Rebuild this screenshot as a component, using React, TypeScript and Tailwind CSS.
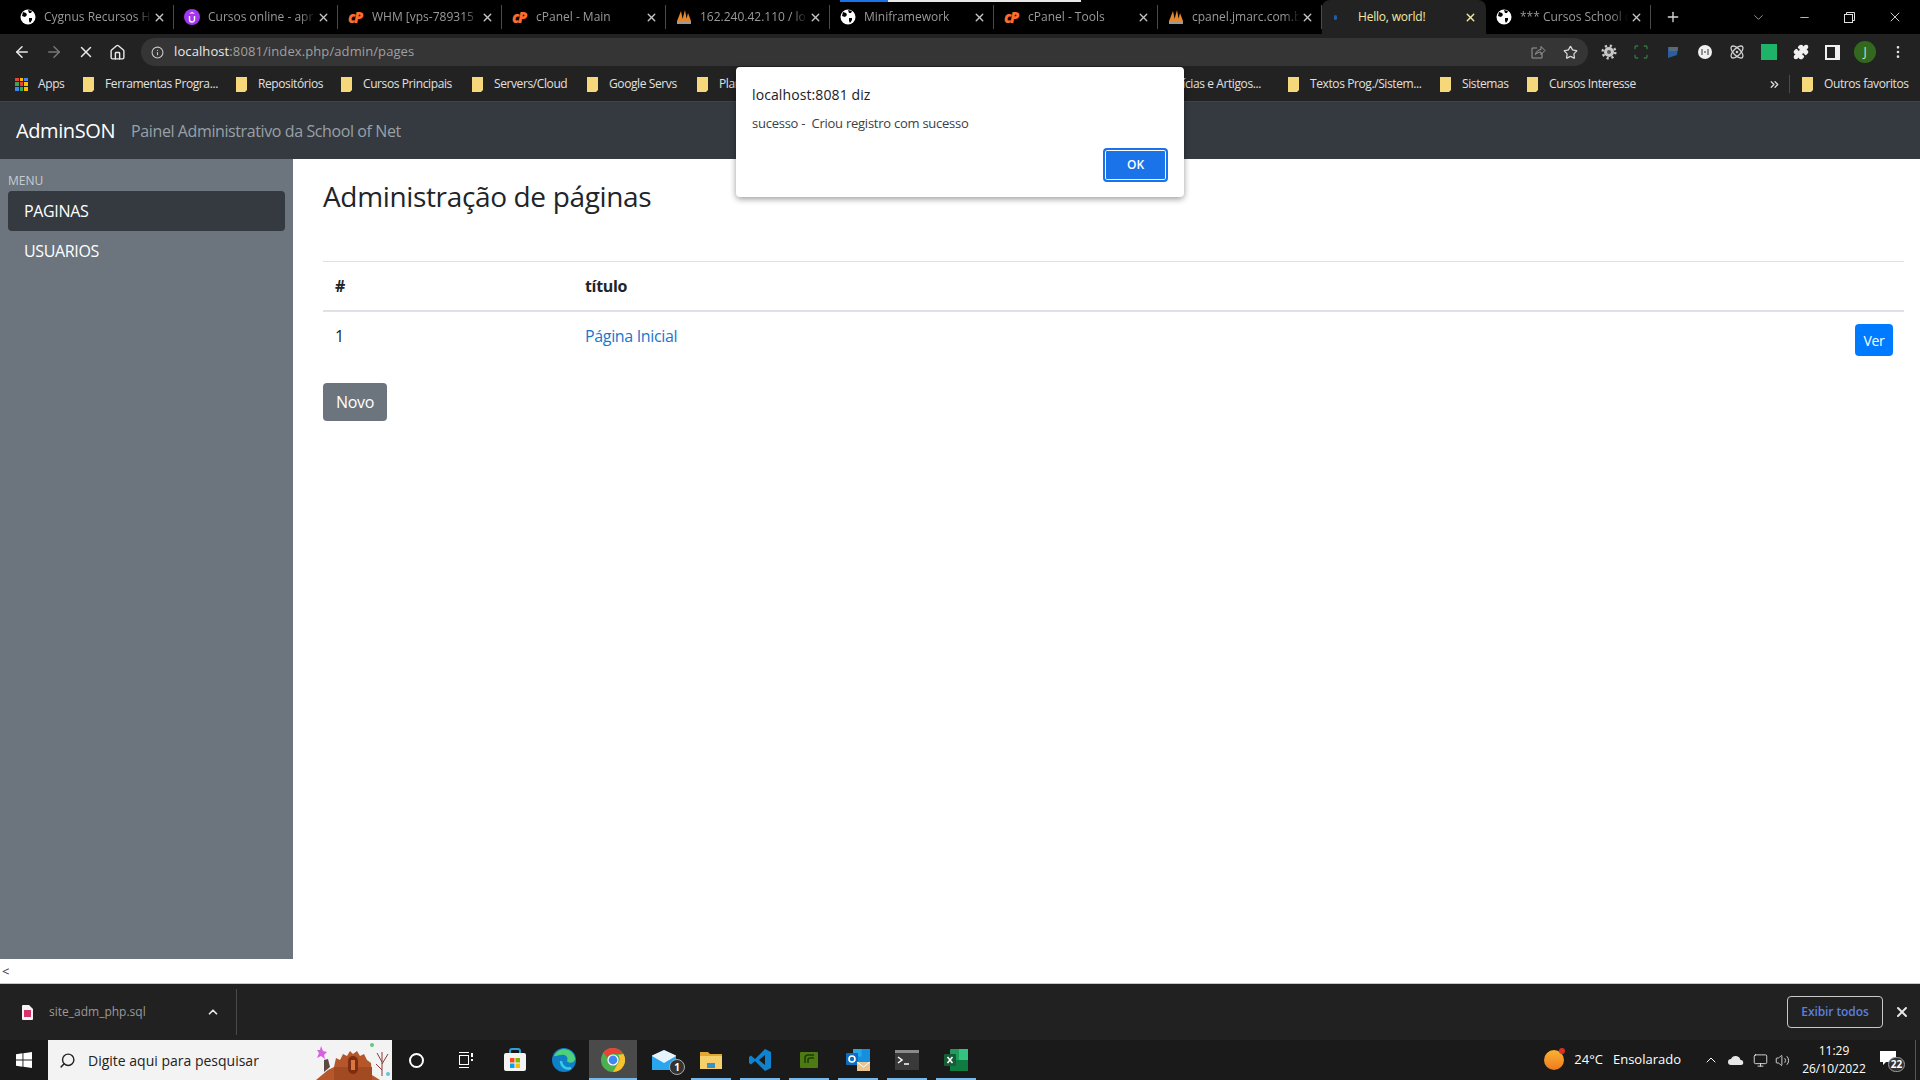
import { ChevronDown, ChevronUp, Minus, Plus, X, ArrowLeft, ArrowRight, Home, Info, Star, Scan, Atom, Puzzle, EllipsisVertical, Search, Volume2, Monitor, ChevronsRight } from 'lucide-react'

function Globe() {
  return (
    <svg width="16" height="16" viewBox="0 0 16 16" className="shrink-0">
      <circle cx="8" cy="8" r="7.5" fill="#fff" />
      <path d="M3 3l3 1 1 2-2 2-3-1zM9 9l3 0 0 2-2 3-1-2zM8 1l4 1-1 2-2 0z" fill="#000" />
    </svg>
  )
}

function CPanelIcon() {
  return (
    <span className="w-4 shrink-0 text-[15px] leading-none font-black italic tracking-[-1.5px] text-[#ff6c2c]">cP</span>
  )
}

function PmaIcon() {
  return (
    <svg width="16" height="16" viewBox="0 0 16 16" className="shrink-0">
      <path d="M1 12 5 2l2 10zM6 12 9 1l2 11zM10 12l2-8 3 8z" fill="#e8862a" />
      <rect x="1" y="12" width="14" height="3" fill="#9a9a9a" />
    </svg>
  )
}

function UdemyIcon() {
  return (
    <svg width="16" height="16" viewBox="0 0 16 16" className="shrink-0">
      <circle cx="8" cy="8" r="8" fill="#a435f0" />
      <path d="M5.5 7v3.5a2.5 2.5 0 0 0 5 0V7" fill="none" stroke="#fff" strokeWidth="1.4" />
      <path d="M8 3l3 1.6H5z" fill="#fff" />
    </svg>
  )
}

const TABS = [
  { title: 'Cygnus Recursos H', icon: <Globe /> },
  { title: 'Cursos online - apr', icon: <UdemyIcon /> },
  { title: 'WHM [vps-789315', icon: <CPanelIcon /> },
  { title: 'cPanel - Main', icon: <CPanelIcon /> },
  { title: '162.240.42.110 / lo', icon: <PmaIcon /> },
  { title: 'Miniframework', icon: <Globe /> },
  { title: 'cPanel - Tools', icon: <CPanelIcon /> },
  { title: 'cpanel.jmarc.com.b', icon: <PmaIcon /> },
]

function Tab({ title, icon, last }: { title: string; icon: React.ReactNode; last?: boolean }) {
  return (
    <div className={`flex h-[24px] w-[164px] shrink-0 items-center pl-[10px] pr-[7px] ${last ? '' : 'border-r border-[#4a4a4a]'}`}>
      {icon}
      <span className="ml-[8px] w-[108px] overflow-hidden whitespace-nowrap text-[12px] text-[#9a9a9a] [mask-image:linear-gradient(to_right,black_85%,transparent)]">
        {title}
      </span>
      <X size={13} strokeWidth={2.5} className="ml-auto shrink-0 text-[#c4c4c4]" />
    </div>
  )
}

function TabBar() {
  return (
    <div className="relative flex h-[34px] items-center bg-black pl-[10px] text-white">
      <div className="absolute left-[840px] top-0 h-[2px] w-[241px] bg-[#e8e8e8]" />
      <div className="absolute left-[840px] top-0 h-[2px] w-[48px] bg-[#1a73e8]" />
      {TABS.map((t) => (
        <Tab key={t.title} title={t.title} icon={t.icon} />
      ))}
      <div className="flex h-[34px] w-[164px] shrink-0 items-center self-end rounded-t-lg bg-[#222222] pl-[12px] pr-[9px]">
        <span className="h-[5px] w-[3px] rounded-full bg-[#1f5fa8]" />
        <span className="ml-[21px] text-[12px] tracking-[-0.2px] text-[#f4e9a4]">Hello, world!</span>
        <X size={13} strokeWidth={2.5} className="ml-auto text-[#f4e9a4]" />
      </div>
      <Tab title="*** Cursos School d" icon={<Globe />} last />
      <div className="h-[24px] border-l border-[#4a4a4a]" />
      <Plus size={16} strokeWidth={2} className="ml-[14px] text-[#d8d8d8]" />
      <ChevronDown size={15} strokeWidth={1.5} className="ml-[70px] text-[#a0a0a0]" />
      <Minus size={13} strokeWidth={1.5} className="ml-[32px] text-[#e0e0e0]" />
      <svg width="11" height="11" viewBox="0 0 11 11" className="ml-[33px]" fill="none" stroke="#e0e0e0">
        <rect x="0.5" y="2.5" width="8" height="8" />
        <path d="M2.5 2.5v-2h8v8h-2" />
      </svg>
      <X size={16} strokeWidth={1.25} className="ml-[32px] text-[#f0f0f0]" />
    </div>
  )
}

function ToolButton({ children, width }: { children: React.ReactNode; width: string }) {
  return <div className={`flex items-center justify-center ${width}`}>{children}</div>
}

function Toolbar() {
  return (
    <div className="flex h-[33px] items-start bg-[#222222] pl-[6px] text-[#e8e8e8]">
      <ToolButton width="h-[28px] w-[32px] mt-[4px]"><ArrowLeft size={18} strokeWidth={2} /></ToolButton>
      <ToolButton width="h-[28px] w-[31px] mt-[4px]"><ArrowRight size={18} strokeWidth={2} className="text-[#777]" /></ToolButton>
      <ToolButton width="h-[28px] w-[33px] mt-[4px]"><X size={18} strokeWidth={2} /></ToolButton>
      <ToolButton width="h-[28px] w-[31px] mt-[4px]"><Home size={17} strokeWidth={2} /></ToolButton>
      <div className="ml-[8px] mt-[4px] flex h-[28px] w-[1447px] items-center rounded-full bg-[#353535] pl-[10px] pr-[10px]">
        <Info size={13} className="text-[#c8c8c8]" />
        <span className="ml-[10px] text-[13px] tracking-[0.1px] text-[#e8e8e8]">
          localhost<span className="text-[#a0a0a0]">:8081/index.php/admin/pages</span>
        </span>
        <svg width="16" height="16" viewBox="0 0 16 16" className="ml-auto" fill="none" stroke="#9a9a9a">
          <path d="M7 4H2v10h10V9.5" />
          <path d="M5.5 10.5C6 7.5 8.5 5.5 11 5.5V2.5l4 4-4 4V8C9 8 7 8.8 5.5 10.5z" />
        </svg>
        <Star size={15} className="ml-[17px] text-[#d8d8d8]" />
      </div>
      <div className="ml-[13px] mt-[4px] flex h-[28px] items-center gap-[16px]">
        <svg width="16" height="16" viewBox="0 0 16 16" fill="none">
          <circle cx="8" cy="8" r="5" fill="#c8c8c8" />
          <circle cx="8" cy="8" r="6.3" stroke="#c8c8c8" strokeWidth="2.5" strokeDasharray="2.2 2.75" />
          <circle cx="8" cy="8" r="2" fill="#555" />
        </svg>
        <Scan size={16} className="text-[#2f7a3c]" />
        <svg width="16" height="16" viewBox="0 0 16 16"><path d="M3 3h10l-1 8-9 3z" fill="#2c5e9e" /><path d="M4 3h9l-.5 4H4z" fill="#5a6a7a" /></svg>
        <svg width="16" height="16" viewBox="0 0 16 16"><circle cx="8" cy="8" r="7" fill="#f0f0f0" /><path d="M5 5v6M11 5v6M7 8h2" stroke="#333" /></svg>
        <Atom size={16} className="text-[#d0d0d0]" />
        <span className="h-[16px] w-[16px] bg-[#1db46a]" />
        <Puzzle size={16} className="text-[#f0f0f0]" fill="#f0f0f0" />
        <span className="h-[15px] w-[15px] border-2 border-r-[5px] border-[#f0f0f0] bg-[#222222]" />
        <span className="-mx-[2px] flex h-[22px] w-[22px] items-center justify-center rounded-full bg-[#33691e] text-[12px] text-[#c8e6c9]">J</span>
        <EllipsisVertical size={16} className="text-[#e0e0e0]" />
      </div>
    </div>
  )
}

function Folder() {
  return (
    <svg width="11" height="15" viewBox="0 0 11 15" className="shrink-0">
      <rect width="11" height="15" fill="#f6d87a" />
      <path d="M9 15l2-2v2z" fill="#222" />
    </svg>
  )
}

const BOOKMARKS = [
  { label: 'Ferramentas Progra...', width: 'w-[153px]' },
  { label: 'Repositórios', width: 'w-[105px]' },
  { label: 'Cursos Principais', width: 'w-[131px]' },
  { label: 'Servers/Cloud', width: 'w-[115px]' },
  { label: 'Google Servs', width: 'w-[110px]' },
  { label: 'Planos', width: 'w-[444px]' },
  { label: 'Notícias e Artigos...', width: 'w-[147px]' },
  { label: 'Textos Prog./Sistem...', width: 'w-[152px]' },
  { label: 'Sistemas', width: 'w-[87px]' },
  { label: 'Cursos Interesse', width: 'w-[241px]' },
]

function Bookmarks() {
  return (
    <div className="flex h-[34px] items-center bg-[#222222] pl-[15px] text-[12px] tracking-[-0.4px] text-[#e0e0e0]">
      <div className="grid h-[13px] w-[13px] grid-cols-3 gap-[1px]">
        <span className="bg-[#ea4335]" /><span className="bg-[#fbbc05]" /><span className="bg-[#4285f4]" />
        <span className="bg-[#34a853]" /><span className="bg-[#ea4335]" /><span className="bg-[#fbbc05]" />
        <span className="bg-[#4285f4]" /><span className="bg-[#34a853]" /><span className="bg-[#fbbc05]" />
      </div>
      <span className="ml-[10px] w-[45px]">Apps</span>
      {BOOKMARKS.map((b) => (
        <div key={b.label} className={`flex shrink-0 items-center overflow-hidden whitespace-nowrap ${b.width}`}>
          <Folder />
          <span className="ml-[11px]">{b.label}</span>
        </div>
      ))}
      <ChevronsRight size={13} strokeWidth={2.5} className="mr-[8px] text-[#d8d8d8]" />
      <div className="mr-[12px] h-[18px] border-l border-[#4a4a4a]" />
      <Folder />
      <span className="ml-[11px] whitespace-nowrap">Outros favoritos</span>
    </div>
  )
}

function Navbar() {
  return (
    <div className="flex h-[58px] items-center border-t border-[#3f444a] bg-[#343a40] pl-[16px] tracking-[-0.4px]">
      <span className="text-[20px] text-white">AdminSON</span>
      <span className="ml-[16px] text-[16px] text-[#9aa0a6]">Painel Administrativo da School of Net</span>
    </div>
  )
}

function Sidebar() {
  return (
    <div className="flex w-[293px] shrink-0 flex-col bg-[#6c757d] px-[8px] pt-[13px] text-white">
      <div className="text-[12px] leading-[18px] text-[#c8ccd0]">MENU</div>
      <div className="mt-[1px] flex h-[40px] items-center rounded bg-[#343a40] pl-[16px] text-[16px] tracking-[-0.35px]">PAGINAS</div>
      <div className="flex h-[40px] items-center pl-[16px] text-[16px] tracking-[-0.35px]">USUARIOS</div>
    </div>
  )
}

function Content() {
  return (
    <div className="flex-1 pl-[30px] pr-[16px] pt-[16px] tracking-[-0.35px] text-[#212529]">
      <h3 className="text-[28px] leading-[42px] font-medium">Administração de páginas</h3>
      <div className="mt-[44px] border-t border-[#dee2e6]">
        <div className="flex h-[50px] items-center border-b-2 border-[#dee2e6] text-[16px] font-bold">
          <div className="w-[262px] pl-[12px]">#</div>
          <div>título</div>
        </div>
        <div className="flex h-[50px] items-start text-[16px]">
          <div className="mt-[12px] w-[262px] pl-[12px]">1</div>
          <a className="mt-[12px] text-[#1a76cc]">Página Inicial</a>
          <button className="mt-[12px] ml-auto mr-[11px] h-[32px] w-[38px] rounded bg-[#007bff] text-[14px] text-white">Ver</button>
        </div>
      </div>
      <button className="mt-[21px] h-[38px] w-[64px] rounded bg-[#6c757d] text-[16px] text-white">Novo</button>
    </div>
  )
}

function AlertDialog() {
  return (
    <div className="absolute left-[736px] top-[67px] h-[130px] w-[448px] rounded bg-white shadow-[0_2px_6px_rgba(0,0,0,0.4)]">
      <div className="pl-[16px] pt-[17px] text-[14px] leading-[22px] tracking-[0.1px] text-[#202124]">localhost:8081 diz</div>
      <div className="pl-[16px] pt-[8px] text-[13px] leading-[18px] tracking-[-0.25px] text-[#3c4043]">sucesso -&nbsp; Criou registro com sucesso</div>
      <button className="absolute left-[367px] top-[81px] h-[34px] w-[65px] rounded border-2 border-[#1a73e8] bg-[#1a73e8] text-[12px] font-semibold text-white shadow-[inset_0_0_0_1px_#fff]">
        OK
      </button>
    </div>
  )
}

function DownloadBar() {
  return (
    <div className="flex h-[57px] items-center border-t border-[#c8c8c8] bg-[#212121] pl-[22px]">
      <svg width="11" height="15" viewBox="0 0 11 15" className="shrink-0">
        <path d="M0 1a1 1 0 0 1 1-1h6l4 4v10a1 1 0 0 1-1 1H1a1 1 0 0 1-1-1z" fill="#f4f4f4" />
        <rect x="2" y="5" width="7" height="7" fill="#d6336c" />
      </svg>
      <span className="ml-[16px] text-[12px] text-[#9a9a9a]">site_adm_php.sql</span>
      <ChevronUp size={14} strokeWidth={3} className="ml-[60px] text-[#e8e8e8]" />
      <div className="ml-[16px] h-[46px] border-l border-[#4a4a4a]" />
      <button className="ml-auto h-[32px] w-[96px] rounded border border-[#c8c8c8] text-[12px] font-semibold tracking-[-0.1px] text-[#5b7fdc]">
        Exibir todos
      </button>
      <X size={16} strokeWidth={3} className="ml-[11px] mr-[10px] text-[#e8e8e8]" />
    </div>
  )
}

function ChromeIcon() {
  return (
    <svg width="24" height="24" viewBox="0 0 24 24">
      <circle cx="12" cy="12" r="12" fill="#4caf50" />
      <path d="M12 0a12 12 0 0 1 10.4 6H12a6 6 0 0 0-5.6 3.8L2.2 4.4A12 12 0 0 1 12 0z" fill="#ea4335" />
      <path d="M22.4 6A12 12 0 0 1 12 24l5.2-9A6 6 0 0 0 17 7z" fill="#fbc02d" />
      <circle cx="12" cy="12" r="5.6" fill="#fff" />
      <circle cx="12" cy="12" r="4.4" fill="#4285f4" />
    </svg>
  )
}

function TaskIcon({ children, width, active, open }: { children: React.ReactNode; width: string; active?: boolean; open?: boolean }) {
  return (
    <div className={`relative flex h-[40px] items-center justify-center ${width} ${active ? 'bg-[#4a4a4a]' : ''}`}>
      {children}
      {(active || open) && <span className="absolute inset-x-0 bottom-0 h-[2px] bg-[#76b9ed]" />}
    </div>
  )
}

function Taskbar() {
  const openItem = 'w-[40px] mr-[9px]'
  return (
    <div className="flex h-[40px] items-center bg-[#1a1a1a] text-white">
      <div className="flex h-[40px] w-[48px] items-center justify-center">
        <svg width="16" height="16" viewBox="0 0 16 16" fill="#fff">
          <path d="M0 2.2 6.5 1.3v6.2H0zM7.4 1.2 16 0v7.5H7.4zM0 8.4h6.5v6.3L0 13.8zM7.4 8.4H16V16l-8.6-1.2z" />
        </svg>
      </div>
      <div className="relative flex h-[40px] w-[344px] items-center overflow-hidden bg-[#f3f3f3] pl-[11px] text-[#222]">
        <Search size={17} className="-scale-x-100" />
        <span className="ml-[12px] text-[14px]">Digite aqui para pesquisar</span>
        <svg width="76" height="40" viewBox="0 0 76 40" className="absolute right-0 top-0">
          <path d="M0 40 12 30l6-3 2-9 4 2 3-6 4 2 3-5 3 3 4-3 3 5 4-2 3 6 4 3 1 12 8 5z" fill="#b5572a" />
          <path d="M18 27h38v13H18z" fill="#a24a22" />
          <rect x="32" y="16" width="10" height="18" rx="5" fill="#7c2d12" />
          <rect x="35" y="20" width="4" height="10" fill="#d9773f" />
          <path d="M66 36V12M66 24l6-10M66 22l-5-9M66 30l-6-6" stroke="#8a3b3b" fill="none" />
          <path d="M5 6l2 5 4 1-3 3 1 4-4-3-4 2 2-5-2-3 3 0z" fill="#d660e0" />
          <path d="M8 20l4-1 2 8-6 5z" fill="#5a4a44" />
          <circle cx="56" cy="5" r="2" fill="#5ecb7a" />
          <circle cx="72" cy="34" r="2" fill="#5ec8d8" />
        </svg>
      </div>
      <TaskIcon width="w-[49px]"><span className="h-[15px] w-[15px] rounded-full border-[2.5px] border-white" /></TaskIcon>
      <TaskIcon width="w-[49px]">
        <svg width="16" height="18" viewBox="0 0 16 18" fill="none" stroke="#fff">
          <rect x="1.5" y="4.5" width="9" height="9" />
          <path d="M1 1.5h10M1 16.5h10" />
          <path d="M14 2v4M14 8v2" strokeWidth="2" />
        </svg>
      </TaskIcon>
      <TaskIcon width="w-[49px]">
        <svg width="24" height="24" viewBox="0 0 24 24">
          <rect x="1" y="5" width="22" height="18" rx="2" fill="#f4f4f4" />
          <path d="M7 5V3a2 2 0 0 1 2-2h6a2 2 0 0 1 2 2v2" fill="none" stroke="#2aa0d8" strokeWidth="2" />
          <rect x="7" y="10" width="4.5" height="4.5" fill="#f25022" />
          <rect x="12.5" y="10" width="4.5" height="4.5" fill="#7fba00" />
          <rect x="7" y="15.5" width="4.5" height="4.5" fill="#00a4ef" />
          <rect x="12.5" y="15.5" width="4.5" height="4.5" fill="#ffb900" />
        </svg>
      </TaskIcon>
      <TaskIcon width="w-[50px]">
        <svg width="24" height="24" viewBox="0 0 24 24">
          <circle cx="12" cy="12" r="12" fill="#0f7fc8" />
          <path d="M2 8a11 11 0 0 1 21 2c1 5-7 6-8 3 2-4-2-7-6-6-4 0-6 2-7 1z" fill="#4fd07a" />
          <path d="M9 13c0 5 5 9 10 7" fill="none" stroke="#38c8e8" strokeWidth="2.5" />
        </svg>
      </TaskIcon>
      <TaskIcon width="w-[48px]" active><ChromeIcon /></TaskIcon>
      <TaskIcon width="w-[54px]">
        <div className="relative">
          <svg width="24" height="20" viewBox="0 0 24 20">
            <path d="M0 6 12 0l12 6v14H0z" fill="#2aa6ee" />
            <path d="M0 6l12 7 12-7v-.5L12 0 0 5.5z" fill="#e8f4fc" />
          </svg>
          <span className="absolute -bottom-[5px] -right-[9px] flex h-[16px] w-[16px] items-center justify-center rounded-full border border-[#aaa] bg-[#333] text-[10px] font-bold">1</span>
        </div>
      </TaskIcon>
      <TaskIcon width={openItem} open>
        <svg width="22" height="20" viewBox="0 0 22 20">
          <path d="M0 2h8l2 2h12v3H0z" fill="#e0a830" />
          <rect y="6" width="22" height="13" fill="#f4cf6a" />
          <rect x="7" y="13" width="8" height="5" fill="#3a8fd0" />
        </svg>
      </TaskIcon>
      <TaskIcon width={openItem} open>
        <svg width="24" height="24" viewBox="0 0 24 24">
          <path d="M17 1 7 11 3 7.5 1 9v6l2 1.5L7 13l10 10 6-3V4z" fill="#0f82d0" />
          <path d="M17 7v10l-6-5z" fill="#1a1a1a" />
        </svg>
      </TaskIcon>
      <TaskIcon width={openItem} open>
        <svg width="20" height="20" viewBox="0 0 20 20">
          <rect x="1" y="2" width="18" height="16" rx="1" fill="#4d7a12" />
          <path d="M6 13V8a3 3 0 0 1 3-3h6M9 13v-3a2 2 0 0 1 2-2h4" fill="none" stroke="#1d3a08" strokeWidth="1.5" />
        </svg>
      </TaskIcon>
      <TaskIcon width={openItem} open>
        <svg width="26" height="24" viewBox="0 0 26 24">
          <rect x="8" y="1" width="17" height="15" fill="#1490df" />
          <rect x="8" y="1" width="8.5" height="7.5" fill="#28a8ea" />
          <rect x="1" y="5" width="12" height="12" rx="1" fill="#0f6cbd" />
          <circle cx="7" cy="11" r="3" fill="none" stroke="#fff" strokeWidth="1.6" />
          <rect x="12" y="14" width="13" height="9" fill="#e8c590" />
          <path d="M12 14l6.5 5 6.5-5" fill="none" stroke="#fff" />
        </svg>
      </TaskIcon>
      <TaskIcon width={openItem} open>
        <svg width="24" height="20" viewBox="0 0 24 20">
          <rect width="24" height="20" fill="#3a3a3a" />
          <rect width="24" height="3" fill="#8a8a8a" />
          <path d="M3 7l4 3-4 3" fill="none" stroke="#fff" strokeWidth="1.5" />
          <path d="M9 14h5" stroke="#fff" strokeWidth="1.5" />
        </svg>
      </TaskIcon>
      <TaskIcon width={openItem} open>
        <svg width="24" height="22" viewBox="0 0 24 22">
          <rect x="6" y="0" width="18" height="22" rx="1" fill="#1f9d5c" />
          <rect x="15" y="0" width="9" height="11" fill="#33c481" />
          <rect x="6" y="11" width="18" height="11" fill="#107c41" />
          <rect x="0" y="5" width="12" height="12" rx="1" fill="#185c37" />
          <path d="M3.5 8l5 6M8.5 8l-5 6" stroke="#fff" strokeWidth="1.5" />
        </svg>
      </TaskIcon>
      <div className="ml-auto flex h-[40px] items-center text-[13px]">
        <div className="relative">
          <span className="block h-[20px] w-[20px] rounded-full bg-gradient-to-b from-[#f9b233] to-[#ee7a1f]" />
          <span className="absolute -right-[1px] -top-[2px] h-[6px] w-[6px] rounded-full bg-[#d93025]" />
        </div>
        <span className="ml-[10px]">24°C</span>
        <span className="ml-[10px]">Ensolarado</span>
        <ChevronUp size={16} strokeWidth={1.5} className="ml-[22px]" />
        <svg width="16" height="10" viewBox="0 0 16 10" className="ml-[9px]" fill="#e8e8e8">
          <path d="M3 10a3 3 0 0 1 0-6 5 5 0 0 1 9.5 1A2.5 2.5 0 0 1 13 10z" />
        </svg>
        <Monitor size={15} strokeWidth={1.25} className="ml-[9px]" />
        <Volume2 size={15} strokeWidth={1.25} className="ml-[7px]" />
        <div className="ml-[12px] w-[64px] text-center text-[12px] leading-[18px]">
          <div>11:29</div>
          <div>26/10/2022</div>
        </div>
        <div className="relative ml-[14px] mr-[11px] h-[24px] w-[24px]">
          <svg width="16" height="14" viewBox="0 0 16 14" className="absolute left-0 top-[3px]" fill="#fff">
            <path d="M0 0h16v11H6l-3 3v-3H0z" />
          </svg>
          <span className="absolute -right-[1px] bottom-0 flex h-[15px] w-[17px] items-center justify-center rounded-full border border-[#999] bg-[#333] text-[10px] font-bold">22</span>
        </div>
        <div className="h-[40px] border-l border-[#555]" />
        <div className="w-[4px]" />
      </div>
    </div>
  )
}

export default function App() {
  return (
    <div className="relative flex h-[1080px] w-[1920px] flex-col overflow-hidden bg-white font-['Open_Sans',sans-serif]">
      <TabBar />
      <Toolbar />
      <Bookmarks />
      <Navbar />
      <div className="flex h-[800px]">
        <Sidebar />
        <Content />
      </div>
      <div className="h-[24px] pl-[2px] text-[13px] leading-[24px] text-[#333]">&lt;</div>
      <DownloadBar />
      <Taskbar />
      <AlertDialog />
    </div>
  )
}
